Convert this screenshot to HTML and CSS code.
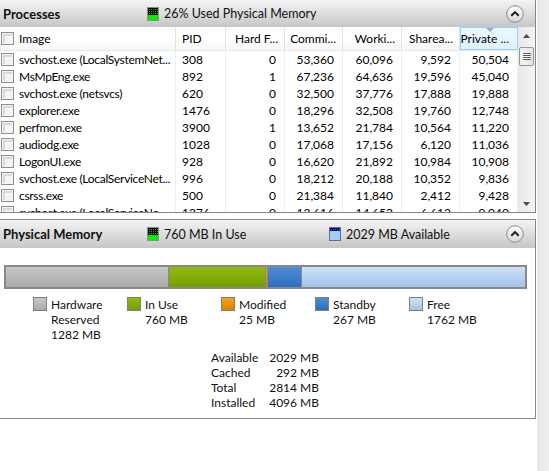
FILE: index.html
```html
<!DOCTYPE html>
<html>
<head>
<meta charset="utf-8">
<link rel="stylesheet" href="styles.css">
</head>
<body>
<div class="window">
  <div class="main">
    <section class="panel processes">
      <div class="panel-header">
        <span class="title">Processes</span>
        <span class="stat">
          <svg class="meter" width="12" height="14" viewBox="0 0 12 14">
            <defs><pattern id="gd1" width="2" height="2" patternUnits="userSpaceOnUse"><rect width="1" height="1" fill="#1fa51f"/></pattern></defs>
            <rect x="0.5" y="0.5" width="11" height="13" fill="#0a0a0a" stroke="#8c8c8c"/>
            <rect x="1" y="1" width="10" height="7" fill="url(#gd1)"/>
            <rect x="1" y="8" width="10" height="5" fill="#00f000"/>
          </svg>
          26% Used Physical Memory
        </span>
        <span class="collapse">
          <svg width="18" height="18" viewBox="0 0 18 18">
            <defs><linearGradient id="cb1" x1="0" y1="0" x2="0" y2="1"><stop offset="0" stop-color="#ffffff"/><stop offset="1" stop-color="#d6d6d6"/></linearGradient></defs>
            <circle cx="9" cy="9" r="8.3" fill="url(#cb1)" stroke="#8a8a8a"/>
            <path d="M5.3 10.8 L9 7.1 L12.7 10.8" fill="none" stroke="#1e1e1e" stroke-width="2"/>
          </svg>
        </span>
      </div>
      <div class="list">
        <div class="table">
          <div class="colhead">
            <div class="cell name"><span class="check"></span>Image</div>
            <div class="cell">PID</div>
            <div class="cell num">Hard F...</div>
            <div class="cell num">Commi...</div>
            <div class="cell num">Worki...</div>
            <div class="cell num">Sharea...</div>
            <div class="cell num sorted">Private ...</div>
          </div>
          <div class="row"><div class="cell name"><span class="check"></span><span class="nm">svchost.exe (LocalSystemNet...</span></div><div class="cell">308</div><div class="cell num">0</div><div class="cell num">53,360</div><div class="cell num">60,096</div><div class="cell num">9,592</div><div class="cell num">50,504</div></div>
          <div class="row"><div class="cell name"><span class="check"></span><span class="nm">MsMpEng.exe</span></div><div class="cell">892</div><div class="cell num">1</div><div class="cell num">67,236</div><div class="cell num">64,636</div><div class="cell num">19,596</div><div class="cell num">45,040</div></div>
          <div class="row"><div class="cell name"><span class="check"></span><span class="nm">svchost.exe (netsvcs)</span></div><div class="cell">620</div><div class="cell num">0</div><div class="cell num">32,500</div><div class="cell num">37,776</div><div class="cell num">17,888</div><div class="cell num">19,888</div></div>
          <div class="row"><div class="cell name"><span class="check"></span><span class="nm">explorer.exe</span></div><div class="cell">1476</div><div class="cell num">0</div><div class="cell num">18,296</div><div class="cell num">32,508</div><div class="cell num">19,760</div><div class="cell num">12,748</div></div>
          <div class="row"><div class="cell name"><span class="check"></span><span class="nm">perfmon.exe</span></div><div class="cell">3900</div><div class="cell num">1</div><div class="cell num">13,652</div><div class="cell num">21,784</div><div class="cell num">10,564</div><div class="cell num">11,220</div></div>
          <div class="row"><div class="cell name"><span class="check"></span><span class="nm">audiodg.exe</span></div><div class="cell">1028</div><div class="cell num">0</div><div class="cell num">17,068</div><div class="cell num">17,156</div><div class="cell num">6,120</div><div class="cell num">11,036</div></div>
          <div class="row"><div class="cell name"><span class="check"></span><span class="nm">LogonUI.exe</span></div><div class="cell">928</div><div class="cell num">0</div><div class="cell num">16,620</div><div class="cell num">21,892</div><div class="cell num">10,984</div><div class="cell num">10,908</div></div>
          <div class="row"><div class="cell name"><span class="check"></span><span class="nm">svchost.exe (LocalServiceNet...</span></div><div class="cell">996</div><div class="cell num">0</div><div class="cell num">18,212</div><div class="cell num">20,188</div><div class="cell num">10,352</div><div class="cell num">9,836</div></div>
          <div class="row"><div class="cell name"><span class="check"></span><span class="nm">csrss.exe</span></div><div class="cell">500</div><div class="cell num">0</div><div class="cell num">21,384</div><div class="cell num">11,840</div><div class="cell num">2,412</div><div class="cell num">9,428</div></div>
          <div class="row"><div class="cell name"><span class="check"></span><span class="nm">svchost.exe (LocalServiceNo...</span></div><div class="cell">1376</div><div class="cell num">0</div><div class="cell num">13,616</div><div class="cell num">14,652</div><div class="cell num">6,612</div><div class="cell num">9,040</div></div>
        </div>
        <div class="vscroll">
          <div class="arrow">
            <svg width="7" height="4" viewBox="0 0 7 4"><path d="M0 4 L3.5 0 L7 4 Z" fill="#4a4a4a"/></svg>
          </div>
          <div class="track">
            <div class="thumb"><span class="grip"></span></div>
          </div>
          <div class="arrow">
            <svg width="7" height="4" viewBox="0 0 7 4"><path d="M0 0 L3.5 4 L7 0 Z" fill="#4a4a4a"/></svg>
          </div>
        </div>
      </div>
    </section>

    <section class="panel memory">
      <div class="panel-header tall">
        <span class="title">Physical Memory</span>
        <span class="stat first">
          <svg class="meter" width="12" height="14" viewBox="0 0 12 14">
            <defs><pattern id="gd2" width="2" height="2" patternUnits="userSpaceOnUse"><rect width="1" height="1" fill="#1fa51f"/></pattern></defs>
            <rect x="0.5" y="0.5" width="11" height="13" fill="#0a0a0a" stroke="#8c8c8c"/>
            <rect x="1" y="1" width="10" height="7" fill="url(#gd2)"/>
            <rect x="1" y="8" width="10" height="5" fill="#00f000"/>
          </svg>
          760 MB In Use
        </span>
        <span class="stat">
          <svg class="meter" width="12" height="14" viewBox="0 0 12 14">
            <defs><pattern id="bd" width="2" height="2" patternUnits="userSpaceOnUse"><rect width="1" height="1" fill="#3b6cff"/></pattern></defs>
            <rect x="0.5" y="0.5" width="11" height="13" fill="#9fd0fb" stroke="#6f6f6f"/>
            <rect x="1" y="1" width="10" height="3" fill="#000a7a"/>
            <rect x="1" y="1" width="10" height="3" fill="url(#bd)"/>
          </svg>
          2029 MB Available
        </span>
        <span class="collapse">
          <svg width="18" height="18" viewBox="0 0 18 18">
            <defs><linearGradient id="cb2" x1="0" y1="0" x2="0" y2="1"><stop offset="0" stop-color="#ffffff"/><stop offset="1" stop-color="#d6d6d6"/></linearGradient></defs>
            <circle cx="9" cy="9" r="8.3" fill="url(#cb2)" stroke="#8a8a8a"/>
            <path d="M5.3 10.8 L9 7.1 L12.7 10.8" fill="none" stroke="#1e1e1e" stroke-width="2"/>
          </svg>
        </span>
      </div>
      <div class="mem-body">
        <div class="bar">
          <div class="seg hw" style="width:162px"></div>
          <div class="seg inuse" style="width:97px"></div>
          <div class="seg mod" style="width:2px"></div>
          <div class="seg standby" style="width:34px"></div>
          <div class="seg free"></div>
        </div>
        <div class="legend">
          <div class="item"><span class="sw hw"></span><div>Hardware<br>Reserved<br>1282 MB</div></div>
          <div class="item"><span class="sw inuse"></span><div>In Use<br>760 MB</div></div>
          <div class="item"><span class="sw mod"></span><div>Modified<br>25 MB</div></div>
          <div class="item"><span class="sw standby"></span><div>Standby<br>267 MB</div></div>
          <div class="item"><span class="sw free"></span><div>Free<br>1762 MB</div></div>
        </div>
        <div class="stats">
          <span>Available</span><span class="v">2029 MB</span>
          <span>Cached</span><span class="v">292 MB</span>
          <span>Total</span><span class="v">2814 MB</span>
          <span>Installed</span><span class="v">4096 MB</span>
        </div>
      </div>
    </section>
  </div>
  <div class="strip"></div>
</div>
</body>
</html>
```
FILE: styles.css
```css
* { box-sizing: border-box; }

body {
  margin: 0;
  width: 549px;
  height: 471px;
  overflow: hidden;
  background: #ffffff;
  color: #000000;
  font-family: Lato, "Open Sans", "DejaVu Sans", sans-serif;
  font-size: 12px;
}

.window {
  display: flex;
  height: 471px;
}

.main {
  width: 537px;
  flex: none;
}

.strip {
  flex: 1;
  background: linear-gradient(to right, #e6e6e6, #efefef);
}

.panel {
  width: 536px;
  border-right: 1px solid #858585;
}

.processes {
  height: 213px;
  border-bottom: 1px solid #858585;
  display: flex;
  flex-direction: column;
}

.memory {
  margin-top: 6px;
  border-top: 1px solid #858585;
  border-bottom: 1px solid #858585;
}

.panel-header {
  flex: none;
  height: 27px;
  display: flex;
  align-items: center;
  padding-left: 3px;
  background: linear-gradient(#f4f4f4, #e0e0e0 45%, #c6c6c6);
}

.panel-header.tall {
  height: 28px;
}

.title {
  width: 144px;
  font-weight: 700;
  font-size: 13px;
  color: #111111;
}

.stat {
  display: flex;
  align-items: center;
  gap: 5px;
  font-size: 12.5px;
  color: #111;
}

.stat.first {
  width: 182px;
}

.meter {
  display: block;
  flex: none;
}

.collapse {
  margin-left: auto;
  margin-right: 11px;
  width: 18px;
  height: 18px;
}

.collapse svg { display: block; }

/* list */
.list {
  flex: 1;
  min-height: 0;
  display: flex;
  overflow: hidden;
}

.table {
  width: 518px;
  flex: none;
}

.colhead,
.row {
  display: grid;
  grid-template-columns: 176px 50px 59px 58px 59px 58px 58px;
}

.colhead {
  height: 24px;
  border-bottom: 1px solid #e8e8e8;
  background: linear-gradient(#ffffff, #ffffff 50%, #f5f6f8);
}

.cell {
  display: flex;
  align-items: center;
  white-space: nowrap;
  overflow: hidden;
  padding-left: 6px;
}

.colhead .cell {
  border-right: 1px solid #dfe2e7;
}

.row {
  height: 17px;
}

.row .cell {
  border-right: 1px solid #eceff4;
}

.cell.name {
  padding-left: 1px;
  gap: 5px;
}

.nm {
  letter-spacing: -0.3px;
}

.cell.num {
  justify-content: flex-end;
  padding-left: 0;
  padding-right: 8px;
}

.colhead .cell.num {
  padding-right: 6px;
}

.colhead .cell.sorted {
  position: relative;
  background: linear-gradient(#eef8fe, #ddf1fc);
  border: 1px solid #96d3f2;
  padding-right: 8px;
}

.sorted::before {
  content: "";
  position: absolute;
  top: 0;
  left: 25px;
  border-left: 4px solid transparent;
  border-right: 4px solid transparent;
  border-top: 4px solid #7ab6dd;
}

.check {
  flex: none;
  width: 13px;
  height: 13px;
  border: 1px solid #8e8f8f;
  background: #f4f4f4;
  box-shadow: inset 0 0 0 1px #f4f4f4, inset 1px 1px 0 2px #d6d9de;
}

/* scrollbar */
.vscroll {
  width: 17px;
  flex: none;
  display: flex;
  flex-direction: column;
  background: linear-gradient(to right, #e9e9e9, #f4f4f4);
}

.arrow {
  height: 17px;
  display: flex;
  align-items: center;
  justify-content: center;
  flex: none;
}

.arrow svg { display: block; }

.track {
  flex: 1;
  padding-top: 3px;
}

.thumb {
  margin-left: 1px;
  width: 15px;
  height: 19px;
  border: 1px solid #969696;
  border-radius: 2px;
  background: linear-gradient(to right, #f6f6f6, #e4e4e4);
  display: flex;
  align-items: center;
  justify-content: center;
}

.grip {
  width: 8px;
  height: 7px;
  background: repeating-linear-gradient(#5e5e5e 0, #5e5e5e 1px, #f8f8f8 1px, #f8f8f8 2px);
}

/* memory body */
.mem-body {
  padding: 17px 0 8px 0;
}

.bar {
  margin-left: 4px;
  width: 523px;
  height: 24px;
  border: 2px solid #888888;
  display: flex;
}

.seg { height: 100%; flex: none; }
.seg + .seg { border-left: 1px solid #888888; }
.seg.free { flex: 1; }

.hw { background: linear-gradient(#c8c8c8, #a9a9a9); }
.inuse { background: linear-gradient(#90bc0c, #749f00); }
.mod { background: linear-gradient(#f7a21d, #e27f00); }
.standby { background: linear-gradient(#4f8dd6, #2e6ec3); }
.free { background: linear-gradient(#cfe1f6, #a3c3eb); }

.legend {
  display: flex;
  margin-top: 8px;
  padding-left: 33px;
  line-height: 15px;
}

.item {
  width: 94px;
  display: flex;
  gap: 4px;
  color: #111;
}

.sw {
  flex: none;
  width: 14px;
  height: 14px;
  border: 1px solid #7e7e7e;
}

.stats {
  display: grid;
  grid-template-columns: 58px 50px;
  margin: 8px 0 0 211px;
  line-height: 15px;
  color: #111;
  white-space: nowrap;
}

.stats .v { text-align: right; }
```
